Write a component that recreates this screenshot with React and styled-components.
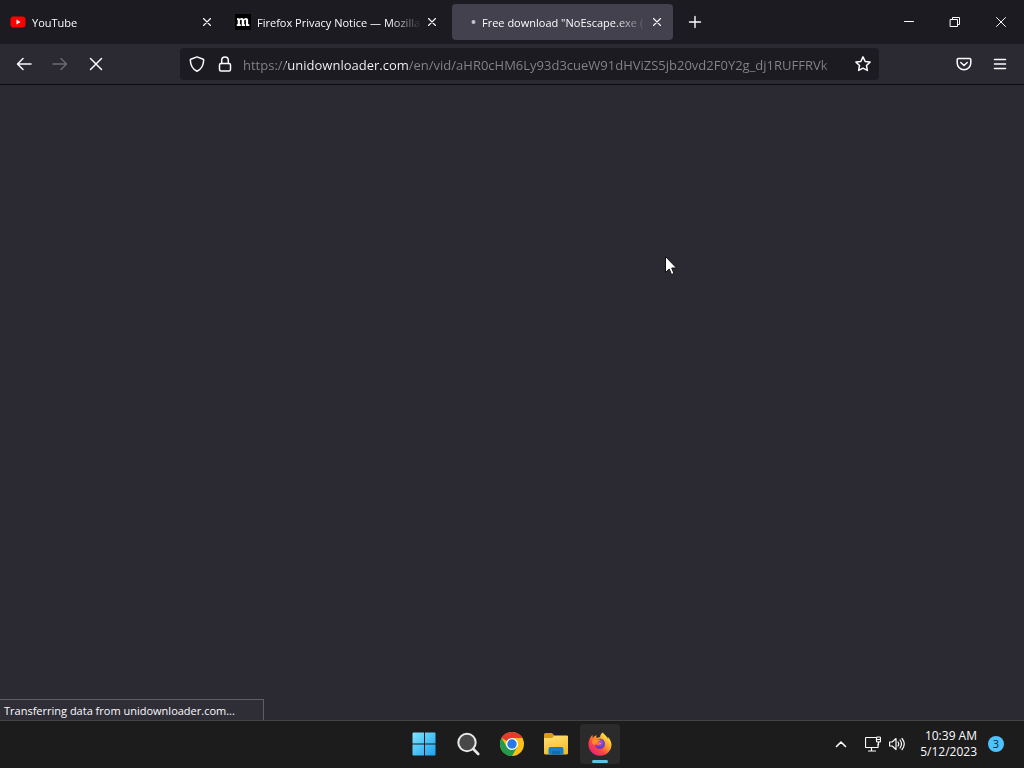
import React from 'react';
import styled, { createGlobalStyle } from 'styled-components';

const GlobalStyle = createGlobalStyle`
  *, *::before, *::after { box-sizing: border-box; }
  body {
    margin: 0;
    background: #2b2a33;
    color: #fbfbfe;
    font-family: "Open Sans", "Noto Sans", sans-serif;
    font-size: 11px;
  }
  button, input { font: inherit; color: inherit; }
  svg { display: block; }
`;

const Screen = styled.div`
  display: flex;
  flex-direction: column;
  min-height: 100vh;
`;

const TabStrip = styled.header`
  display: flex;
  align-items: center;
  height: 44px;
  padding-left: 2px;
  background: #1c1b22;
`;

const TabList = styled.div`
  display: flex;
  gap: 4px;
  min-width: 0;
`;

const Tab = styled.div`
  display: flex;
  align-items: center;
  width: 221px;
  height: 36px;
  padding: 0 6px 0 8px;
  border-radius: 4px;
  background: ${(p) => (p.$active ? '#42414d' : 'transparent')};
`;

const Favicon = styled.span`
  flex: none;
  width: 16px;
  height: 16px;
  margin-right: 6px;
`;

const TabTitle = styled.span`
  flex: 1;
  min-width: 0;
  overflow: hidden;
  white-space: nowrap;
  line-height: 20px;
  padding-top: 2px;
  mask-image: linear-gradient(to left, transparent, #000 32px);
`;

const BareButton = styled.button`
  display: flex;
  flex: none;
  align-items: center;
  justify-content: center;
  padding: 0;
  border: 0;
  border-radius: 4px;
  background: transparent;
`;

const CloseButton = styled(BareButton)`
  width: 20px;
  height: 24px;
`;

const NewTabButton = styled(BareButton)`
  width: 36px;
  height: 36px;
  margin-left: 4px;
`;

const WindowControls = styled.div`
  display: flex;
  margin-left: auto;
`;

const WindowButton = styled(BareButton)`
  width: 46px;
  height: 44px;
`;

const Toolbar = styled.nav`
  display: flex;
  align-items: center;
  gap: 4px;
  height: 41px;
  padding: 0 8px;
  border-bottom: 1px solid #0c0c0d;
  background: #2b2a33;
`;

const ToolButton = styled(BareButton)`
  width: 32px;
  height: 32px;
  color: ${(p) => (p.disabled ? '#6c6b75' : '#fbfbfe')};
`;

const AddressBar = styled.form`
  display: flex;
  flex: 1;
  align-items: center;
  min-width: 0;
  height: 32px;
  margin: 0 65px 0 64px;
  padding: 0 2px 0 3px;
  border-radius: 4px;
  background: #1c1b22;
`;

const AddressButton = styled(BareButton)`
  width: 28px;
  height: 28px;
`;

const AddressInput = styled.input`
  flex: 1;
  min-width: 0;
  height: 28px;
  margin: 0 4px;
  padding: 2px 0 0;
  border: 0;
  outline: 0;
  font-size: 13px;
  color: transparent;
  background: linear-gradient(to right, #85858a 43px, #fbfbfe 43px, #fbfbfe 166px, #85858a 166px);
  background-clip: text;
  mask-image: linear-gradient(to left, transparent, #000 24px);
`;

const Page = styled.main`
  position: relative;
  flex: 1;
  background: #2b2a33;
`;

const StatusPanel = styled.div`
  position: absolute;
  left: 0;
  bottom: 0;
  width: 264px;
  height: 21px;
  padding: 0 4px;
  border: 1px solid #5f5e66;
  border-width: 1px 1px 0 0;
  background: #2f2e37;
  line-height: 22px;
  white-space: nowrap;
`;

const Pointer = styled.svg`
  position: absolute;
  left: 665px;
  top: 171px;
`;

const Taskbar = styled.footer`
  display: grid;
  grid-template-columns: 1fr auto 1fr;
  align-items: center;
  height: 48px;
  box-shadow: inset 0 1px #434246;
  background: #1c1c1c;
`;

const Apps = styled.div`
  grid-column: 2;
  display: flex;
  gap: 4px;
`;

const AppButton = styled(BareButton)`
  position: relative;
  width: 40px;
  height: 40px;
  background: ${(p) => (p.$active ? '#2b2b2b' : 'transparent')};

  &::after {
    content: '';
    position: absolute;
    bottom: 1px;
    width: 16px;
    height: 3px;
    border-radius: 2px;
    background: ${(p) => (p.$active ? '#60bfe8' : 'transparent')};
  }
`;

const Tray = styled.div`
  display: flex;
  align-items: center;
  justify-content: flex-end;
  padding-right: 20px;
`;

const TrayButton = styled(BareButton)`
  width: ${(p) => (p.$wide ? '40px' : '24px')};
  height: 40px;
`;

const Clock = styled.time`
  margin: 0 11px;
  font-size: 12px;
  line-height: 16px;
  text-align: right;
`;

const Badge = styled.span`
  width: 16px;
  height: 16px;
  border-radius: 50%;
  background: #4cc2ff;
  color: #10222e;
  line-height: 16px;
  text-align: center;
`;

const Line = ({ size = 16, width = 1.3, children }) => (
  <svg width={size} height={size} viewBox={`0 0 ${size} ${size}`} fill="none" stroke="currentColor"
    strokeWidth={width} strokeLinecap="round" strokeLinejoin="round" aria-hidden="true">
    {children}
  </svg>
);

const YouTubeIcon = () => (
  <svg width="16" height="16" viewBox="0 0 16 16">
    <rect x="0.5" y="2.5" width="15" height="11" rx="3" fill="#f00" />
    <path d="M6.5 5.6v4.8l4-2.4z" fill="#fff" />
  </svg>
);

const MozillaIcon = () => (
  <svg width="16" height="16" viewBox="0 0 16 16">
    <rect width="16" height="16" fill="#000" />
    <path d="M2 4.2h2.6v1.1q.9-1.3 2.2-1.3 1.4 0 1.9 1.3Q9.700 4 11.100 4q2 0 2 2.300V10.300h1.200V12h-3.400V6.800q0-1-.7-1-1 0-1 1.300v3.200h.8V12H6.700V6.800q0-1-.7-1-1.100 0-1.100 1.300v3.200h.9V12H1.800v-1.700h.9V5.900H2z" fill="#fff" />
  </svg>
);

const LoadingDot = () => (
  <svg width="16" height="16" viewBox="0 0 16 16"><circle cx="13.500" cy="8" r="2" fill="#c4c3cc" /></svg>
);

const CloseIcon = () => <Line width={1.1}><path d="M4.500 4.500l7 7M11.500 4.500l-7 7" /></Line>;

const WindowsIcon = () => (
  <svg width="24" height="24" viewBox="0 0 24 24">
    <defs>
      <linearGradient id="win" gradientUnits="userSpaceOnUse" x1="1" y1="1" x2="23" y2="23">
        <stop offset="0" stopColor="#7fe3ff" /><stop offset="1" stopColor="#1ba4f0" />
      </linearGradient>
    </defs>
    <path fill="url(#win)" d="M1.500.500H12v11H.500v-10a1 1 0 0 1 1-1zM13 .500h9.500a1 1 0 0 1 1 1v10H13zM.500 12.500H12v11H1.500a1 1 0 0 1-1-1zM13 12.500h10.500v10a1 1 0 0 1-1 1H13z" />
  </svg>
);

const SearchIcon = () => (
  <svg width="24" height="24" viewBox="0 0 24 24" fill="none" stroke="#e8e8e8">
    <circle cx="11" cy="10.500" r="8.700" fill="#484848" strokeWidth="2" />
    <path d="M17.300 17l4.900 5" strokeWidth="2.600" strokeLinecap="round" />
  </svg>
);

const ChromeIcon = () => (
  <svg width="24" height="24" viewBox="0 0 24 24">
    <circle cx="12" cy="12" r="12" fill="#fbc116" />
    <path d="M12 12L1.600 6A12 12 0 0 1 22.400 6H12z" fill="#e33b2e" />
    <path d="M1.600 6A12 12 0 0 0 12 24l5.200-9L12 12 6.800 15z" fill="#229b4d" />
    <circle cx="12" cy="12" r="6" fill="#fff" />
    <circle cx="12" cy="12" r="4.700" fill="#2878e6" />
  </svg>
);

const FolderIcon = () => (
  <svg width="24" height="24" viewBox="0 0 24 24">
    <defs>
      <linearGradient id="folder" x1="0" y1="0" x2="0.300" y2="1">
        <stop offset="0" stopColor="#ffe178" /><stop offset="1" stopColor="#f7bd26" />
      </linearGradient>
    </defs>
    <path d="M0 2.500A1.500 1.500 0 0 1 1.500 1H8l2.500 2.500V8H0z" fill="#d99b13" />
    <path d="M0 6h8l2.500-2.500H23a1 1 0 0 1 1 1V21a1.500 1.500 0 0 1-1.500 1.500h-21A1.500 1.500 0 0 1 0 21z" fill="url(#folder)" />
    <path d="M4.500 22.500V17a2 2 0 0 1 2-2h11a2 2 0 0 1 2 2v5.500z" fill="#167fc8" />
    <path d="M8 22.500V20a1 1 0 0 1 1-1h6a1 1 0 0 1 1 1v2.500z" fill="#0f6cb4" />
  </svg>
);

const FirefoxIcon = () => (
  <svg width="24" height="24" viewBox="0 0 24 24">
    <defs>
      <linearGradient id="fox" x1="0.850" y1="0.100" x2="0.150" y2="0.900">
        <stop offset="0" stopColor="#fff04a" /><stop offset="0.350" stopColor="#ffa62b" />
        <stop offset="0.650" stopColor="#ff4a3d" /><stop offset="1" stopColor="#e8207c" />
      </linearGradient>
      <radialGradient id="globe" cx="0.500" cy="0.350" r="0.650">
        <stop offset="0" stopColor="#a456ed" /><stop offset="1" stopColor="#5a35b8" />
      </radialGradient>
    </defs>
    <path fill="url(#fox)" d="M22.200 8.200c-.6-1.500-1.700-2.700-2.800-3.400.6 1 .8 1.800.9 2.400C18.900 4 16.300 2.900 14.700.500c-1.900 1.200-2.500 3.100-2.600 4.400-1.200.1-2.300.5-3.300 1.200-.6-.4-.7-1.900-.3-3C6.900 3.900 5.700 5 5 5.900c-.6-.7-.5-2.600-.4-3.100C3.500 3.600.500 7.600.500 12.500a11.500 11.300 0 0 0 23 0c0-1.500-.6-3.200-1.300-4.300z" />
    <path fill="url(#globe)" d="M12.300 6.600c3.300.2 5 2.900 4.700 5.700-.3 2.800-2.300 4.700-5 4.700-2.900 0-4.900-1.700-5.200-4.200 1.700 1.200 3.400.7 4.600-.1 1-.6 1.900-.7 2-1.300-.1-.7-1.400-1-2.800-1-1.200 0-2-.9-1.900-2 .6-1.100 1.900-1.800 3.600-1.800z" />
    <path fill="#ff8a2a" d="M4.400 7.200c1.800-.7 3.600-.3 4.600.4 1.200.2 3 .1 3.300.5-.2 1-2.200 1.300-2.500 2 0 1-.4 1.300-1.400 1.300-1.200 0-2 .8-2 1.900L4 11z" />
  </svg>
);

const tabs = [
  { title: 'YouTube', icon: <YouTubeIcon /> },
  { title: 'Firefox Privacy Notice — Mozilla', icon: <MozillaIcon /> },
  { title: 'Free download "NoEscape.exe (', icon: <LoadingDot />, active: true },
];

const apps = [
  { name: 'Start', icon: <WindowsIcon /> },
  { name: 'Search', icon: <SearchIcon /> },
  { name: 'Google Chrome', icon: <ChromeIcon /> },
  { name: 'File Explorer', icon: <FolderIcon /> },
  { name: 'Firefox', icon: <FirefoxIcon />, active: true },
];

export default function App() {
  return (
    <Screen>
      <GlobalStyle />
      <TabStrip>
        <TabList>
          {tabs.map((tab) => (
            <Tab key={tab.title} $active={tab.active}>
              <Favicon>{tab.icon}</Favicon>
              <TabTitle>{tab.title}</TabTitle>
              <CloseButton aria-label={`Close ${tab.title}`}><CloseIcon /></CloseButton>
            </Tab>
          ))}
        </TabList>
        <NewTabButton aria-label="New tab"><Line width={1.4}><path d="M8 2.500v11M2.500 8h11" /></Line></NewTabButton>
        <WindowControls>
          <WindowButton aria-label="Minimize"><Line width={1}><path d="M3.500 7.500h9" /></Line></WindowButton>
          <WindowButton aria-label="Restore">
            <Line width={1}><path d="M3.500 5.500h7v7h-7zM5.500 5.500v-2h7v7h-2" /></Line>
          </WindowButton>
          <WindowButton aria-label="Close window"><Line width={1}><path d="M3.500 3.500l9 9M12.500 3.500l-9 9" /></Line></WindowButton>
        </WindowControls>
      </TabStrip>

      <Toolbar aria-label="Navigation">
        <ToolButton aria-label="Back"><Line width={1.5}><path d="M15 8H1.500M7 2.500L1.500 8 7 13.500" /></Line></ToolButton>
        <ToolButton aria-label="Forward" disabled><Line><path d="M1 8h13.500M9 2.500L14.500 8 9 13.500" /></Line></ToolButton>
        <ToolButton aria-label="Stop"><Line width={1.500}><path d="M2.500 2.500l11 11M13.500 2.500l-11 11" /></Line></ToolButton>
        <AddressBar>
          <AddressButton type="button" aria-label="Tracking protection">
            <Line width={1.500}><path d="M8 .900l6.200 2.300c.4.200.5.400.5.800C14.500 9.300 12.800 13 8 15.200 3.200 13 1.500 9.300 1.300 4c0-.4.1-.6.5-.8z" /></Line>
          </AddressButton>
          <AddressButton type="button" aria-label="Connection secure">
            <Line width={1.500}><rect x="2.500" y="7.500" width="11" height="7.500" rx="1.500" /><path d="M4.700 7.500V4.200a3.300 3.300 0 0 1 6.600 0v3.300" /></Line>
          </AddressButton>
          <AddressInput
            aria-label="Address"
            defaultValue="https://unidownloader.com/en/vid/aHR0cHM6Ly93d3cueW91dHViZS5jb20vd2F0Y2g_dj1RUFFRVk"
          />
          <AddressButton type="button" aria-label="Bookmark this page">
            <Line width={1.500}><path d="M8 .900l2.150 4.500 4.900.7-3.550 3.450.85 4.900L8 12.150l-4.350 2.300.85-4.900L.950 6.100l4.900-.7z" /></Line>
          </AddressButton>
        </AddressBar>
        <ToolButton aria-label="Save to Pocket">
          <Line width={1.500}><path d="M2.500 2.500h11a1.300 1.300 0 0 1 1.300 1.300V7a6.800 6.800 0 0 1-13.600 0V3.800a1.300 1.300 0 0 1 1.300-1.300zM4.800 6.500L8 9.500l3.200-3" /></Line>
        </ToolButton>
        <ToolButton aria-label="Open menu"><Line width={1.500}><path d="M2.500 3.500h11M2.500 8h11M2.500 12.500h11" /></Line></ToolButton>
      </Toolbar>

      <Page>
        <Pointer width="12" height="20" viewBox="0 0 12 20" aria-hidden="true">
          <path d="M.500.500v16l3.700-3.500 2.300 5.500 2.500-1-2.300-5.500h4.800z" fill="#fff" stroke="#111" />
        </Pointer>
        <StatusPanel role="status">Transferring data from unidownloader.com...</StatusPanel>
      </Page>

      <Taskbar>
        <Apps>
          {apps.map((app) => (
            <AppButton key={app.name} aria-label={app.name} $active={app.active}>{app.icon}</AppButton>
          ))}
        </Apps>
        <Tray>
          <TrayButton $wide aria-label="Show hidden icons"><Line width={1.600}><path d="M3.500 10.500L8 6l4.500 4.500" /></Line></TrayButton>
          <TrayButton aria-label="Network">
            <Line width={1.200}>
              <path d="M10.500 1.500H1.200a.7.7 0 0 0-.7.7v8.600c0 .4.300.7.700.7H13V8M6.500 11.500v3.500M3.500 15h7" />
              <rect x="11.500" y="1" width="4" height="5" rx="1" /><path d="M13.500 6v3M12 3.500h3" />
            </Line>
          </TrayButton>
          <TrayButton aria-label="Volume">
            <Line width={1.200}><path d="M.600 6v4h2.600L7 13.500v-11L3.200 6zM9 6q1.500 2 0 4M11 4q3 4 0 8M13 2.500q4.500 5.500 0 11" /></Line>
          </TrayButton>
          <Clock dateTime="2023-05-12T10:39">10:39 AM<br />5/12/2023</Clock>
          <Badge>3</Badge>
        </Tray>
      </Taskbar>
    </Screen>
  );
}
